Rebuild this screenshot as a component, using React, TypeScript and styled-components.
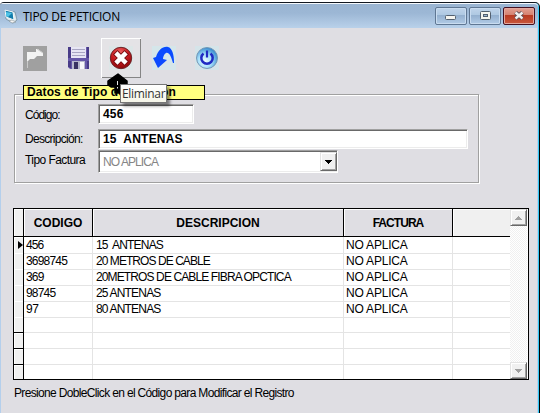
import React from "react";
import styled, { createGlobalStyle, css } from "styled-components";

const Global = createGlobalStyle`
  * { box-sizing: border-box; }
  body { margin: 0; background: #fff; overflow: hidden; }
`;

const Desktop = styled.main`
  width: 540px;
  height: 413px;
  padding-top: 2px;
  background: #fff;
  font: 12px/16px "Liberation Sans", Arial, sans-serif;
  color: #000;
`;

const Window = styled.section`
  position: relative;
  height: 411px;
  display: flex;
  flex-direction: column;
  border-top: 1px solid #111820;
  border-right: 1px solid #000;
  border-top-right-radius: 5px;
  border-top-left-radius: 4px;
  box-shadow: inset -1px 0 #35c9f5, inset -2px 0 #bcd2ea, inset 1px 0 #b4cfec;
  background: #dfdee3;
  overflow: hidden;
`;

const TitleBar = styled.header`
  height: 25px;
  flex: none;
  display: flex;
  align-items: flex-start;
  margin-right: 1px;
  padding: 4px 3px 0 4px;
  border-top: 1px solid #f4f8fc;
  border-top-right-radius: 4px;
  background: linear-gradient(#9ab5d2, #9cb7d5 38%, #b9d1ea);
`;

const Title = styled.h1`
  flex: 1;
  margin: 0 0 0 5px;
  font: 12px/16px "Open Sans", "Noto Sans", sans-serif;
  padding-top: 1px;
  letter-spacing: -0.27px;
`;

const WindowButtons = styled.div`
  display: flex;
  gap: 2px;
  margin-top: -1px;
`;

const WindowButton = styled.button<{ $close?: boolean }>`
  width: 32px;
  height: 18px;
  display: grid;
  place-items: center;
  padding: 0;
  border: 1px solid ${(p) => (p.$close ? "#451020" : "#5f7793")};
  border-radius: 2px;
  box-shadow: inset 0 0 0 1px ${(p) => (p.$close ? "#e3a79d" : "#c9dcf0")};
  background: ${(p) =>
    p.$close
      ? "linear-gradient(#e3a093, #d4806f 45%, #b83a22 46%, #c9573c)"
      : "linear-gradient(#bfd4ea, #aec8e2 45%, #94b0cf 46%, #b1cbe6)"};
`;

const Toolbar = styled.nav`
  display: flex;
  align-items: center;
  gap: 3px;
  height: 40px;
  margin: 10px 0 7px 15px;
  flex: none;
`;

const ToolButton = styled.button<{ $raised?: boolean }>`
  width: 40px;
  height: 40px;
  display: grid;
  place-items: center;
  padding: 0;
  border: 0;
  background: transparent;
  ${(p) =>
    p.$raised &&
    css`
      background: #e4e3e6;
      box-shadow: inset 1px 1px #fff, inset -1px -1px #858585;
    `}
`;

const Group = styled.fieldset`
  width: 465px;
  height: 98px;
  flex: none;
  margin: 0 0 0 14px;
  padding: 0;
  border: 0;
  display: flex;
  flex-direction: column;
`;

const GroupLabel = styled.div`
  position: relative;
  z-index: 1;
  flex: none;
  width: 182px;
  height: 15px;
  margin-left: 9px;
  padding-left: 3px;
  border: 1px solid #000;
  background: #ffff80;
  font-weight: bold;
  line-height: 13px;
  letter-spacing: 0.1px;
  white-space: nowrap;
`;

const GroupFrame = styled.div`
  height: 89px;
  margin-top: -6px;
  padding: 9px 0 0 10px;
  border: 1px solid #a0a0a0;
  box-shadow: 1px 1px #fff, inset 1px 1px #fff;
  flex: none;
`;

const FormRow = styled.div<{ $gap?: number }>`
  display: flex;
  align-items: flex-start;
  margin-bottom: ${(p) => p.$gap ?? 0}px;
`;

const FieldLabel = styled.label<{ $track: number; $top: number }>`
  width: 73px;
  padding-top: ${(p) => p.$top}px;
  line-height: 14px;
  letter-spacing: ${(p) => p.$track}px;
  white-space: pre;
`;

const Field = styled.div<{ $w: number; $h?: number; $track?: number; $muted?: boolean }>`
  width: ${(p) => p.$w}px;
  height: ${(p) => p.$h ?? 20}px;
  display: flex;
  align-items: center;
  justify-content: space-between;
  padding-left: 4px;
  border: 1px solid;
  border-color: #a0a0a0 #fff #fff #a0a0a0;
  box-shadow: inset 1px 1px #696969, inset -1px -1px #ececec;
  background: #fff;
  font-weight: ${(p) => (p.$muted ? "normal" : "bold")};
  color: ${(p) => (p.$muted ? "#858585" : "#000")};
  letter-spacing: ${(p) => p.$track ?? 0}px;
  white-space: pre;
`;

const ArrowButton = styled.button<{ $h: number }>`
  width: 17px;
  height: ${(p) => p.$h}px;
  flex: none;
  display: grid;
  place-items: center;
  padding: 0;
  border: 1px solid;
  border-color: #e3e3e3 #696969 #696969 #e3e3e3;
  box-shadow: inset 1px 1px #fff, inset -1px -1px #a0a0a0;
  background: #f0f0f0;
`;

const Grid = styled.div`
  width: 516px;
  height: 172px;
  flex: none;
  display: flex;
  margin: 25px 0 0 13px;
  border: 1px solid #000;
  background: #fff;
`;

const Rows = styled.div`
  width: 496px;
  overflow: hidden;
`;

const columns = "10px 69px 251px 109px 57px";

const HeaderRow = styled.div`
  display: grid;
  grid-template-columns: ${columns};
  height: 28px;
  border-bottom: 1px solid #000;
`;

const HeaderCell = styled.div<{ $track?: number; $light?: boolean; $last?: boolean }>`
  display: grid;
  place-items: center;
  padding-top: 1px;
  border-right: ${(p) => (p.$last ? 0 : 1)}px solid #000;
  box-shadow: inset 1px 1px #fff;
  background: ${(p) => (p.$light ? "#f0f0f0" : "#dfdee3")};
  font-weight: bold;
  letter-spacing: ${(p) => p.$track ?? 0}px;
`;

const Row = styled.div`
  display: grid;
  grid-template-columns: ${columns};
  height: 16px;
`;

const Selector = styled.div`
  display: flex;
  align-items: center;
  justify-content: flex-end;
  border-right: 1px solid #000;
  border-bottom: 1px solid #000;
  background: #f0f0f0;
  box-shadow: inset 1px 1px #fff;
`;

const Cell = styled.div<{ $track?: number; $last?: boolean; $pad?: number }>`
  padding-left: ${(p) => p.$pad ?? 2}px;
  border-right: ${(p) => (p.$last ? 0 : 1)}px solid #e4e4e4;
  border-bottom: 1px solid #e4e4e4;
  line-height: 16px;
  letter-spacing: ${(p) => p.$track ?? 0}px;
  white-space: pre;
`;

const ScrollBar = styled.div`
  width: 17px;
  display: flex;
  flex-direction: column;
  justify-content: space-between;
  background: repeating-conic-gradient(#f0f0f0 0 25%, #fff 0 50%) 0 0 / 2px 2px;
`;

const Hint = styled.p`
  margin: 5px 0 0 14px;
  line-height: 16px;
  letter-spacing: -0.66px;
  white-space: nowrap;
`;

const Tooltip = styled.div`
  position: absolute;
  z-index: 3;
  left: 120px;
  top: 81px;
  width: 47px;
  height: 19px;
  padding-left: 1px;
  border: 1px solid #767676;
  background: linear-gradient(#fff, #f5f5e8);
  box-shadow: 3px 3px 3px #0007;
  font: 12px/18px "Open Sans", "Noto Sans", sans-serif;
  letter-spacing: -0.32px;
  color: #333;
`;

const Pointer = styled.svg`
  position: absolute;
  z-index: 2;
  left: 107px;
  top: 70px;
`;

const Arrow = ({ up, color = "#000" }: { up?: boolean; color?: string }) => (
  <svg width="7" height="4" shapeRendering="crispEdges">
    <path d={up ? "M0 4h7v-1h-1v-1h-1v-1h-1v-1h-1v1h-1v1h-1v1h-1z" : "M0 0h7v1h-1v1h-1v1h-1v1h-1v-1h-1v-1h-1v-1h-1z"} fill={color} />
  </svg>
);

const AppIcon = () => (
  <svg width="14" height="16" viewBox="0 0 14 16">
    <path d="M1 2 11 4 13 12 9 15 2 11z" fill="#dfe9ee" stroke="#668293" strokeWidth=".7" />
    <path d="M1 2 9 4 10 12 2 9z" fill="#127cab" stroke="#f2fafc" />
    <path d="M2 4 8 5 4 9 2 8z" fill="#4fc3e6" />
    <path d="m5 13 3-1 4 2-4 1z" fill="#f4f4f4" stroke="#78868d" strokeWidth=".5" />
  </svg>
);

const NewIcon = () => (
  <svg width="24" height="25">
    <path d="M0 0h24v25H0z" fill="#a0a0a0" />
    <path d="M4 6h9V3h2l5 4v3h-6l-3 3H7l-3 3z" fill="#f3f3f3" />
    <path d="M4.500 15v7M14 3l6 4" fill="none" stroke="#c9c9c9" />
  </svg>
);

const SaveIcon = () => (
  <svg width="23" height="24">
    <path d="M1 1h21v22H3l-2-2z" fill="#6557a8" />
    <path d="M1 1h3v21l-3-1zM20 1h2v22h-2z" fill="#483b88" />
    <path d="M4 1h15v11H4z" fill="#e7e6f4" />
    <path d="M5 3.500h13M5 6.500h13M5 9.500h13" stroke="#a9a6c4" />
    <path d="M1 12h21v3H1z" fill="#6557a8" />
    <path d="M5 15h13v8H5z" fill="#b8b9ce" />
    <path d="M7 16h4v7H7z" fill="#393263" />
    <path d="M13 16h4v7h-4z" fill="#f6f6fa" />
  </svg>
);

const DeleteIcon = () => (
  <svg width="24" height="24">
    <defs>
      <radialGradient id="red" cx=".45" cy=".25" r=".8">
        <stop stopColor="#ee6666" />
        <stop offset=".5" stopColor="#c81c20" />
        <stop offset="1" stopColor="#830609" />
      </radialGradient>
    </defs>
    <path d="M0 0h24v24H0z" fill="#dce6e7" />
    <circle cx="12" cy="12" r="10.700" fill="url(#red)" stroke="#6b2528" />
    <path d="m8.500 8.500 7 7m0-7-7 7" stroke="#7d1115" strokeWidth="6.500" strokeLinecap="square" />
    <path d="m8.500 8.500 7 7m0-7-7 7" stroke="#fff" strokeWidth="4.500" strokeLinecap="square" />
  </svg>
);

const UndoIcon = () => (
  <svg width="24" height="24">
    <path d="M0 0h24v24H0z" fill="#d5e6ea" />
    <path d="M1 12 4 11C6 4 11 0 16 1c4 1 6 7 6 16h-1C19 10 17 6 14 7c-2 1-3 4-3 6l4 1-9 8z" fill="#0a4bff" />
  </svg>
);

const PowerIcon = () => (
  <svg width="24" height="24">
    <defs>
      <radialGradient id="blue" cx=".4" cy=".65" r=".65">
        <stop stopColor="#effcff" />
        <stop offset=".5" stopColor="#a7e0fa" />
        <stop offset="1" stopColor="#368bd0" />
      </radialGradient>
    </defs>
    <path d="M0 0h24v24H0z" fill="#d5e4e9" />
    <circle cx="12" cy="12" r="10.500" fill="url(#blue)" stroke="#7899b6" />
    <path d="M8.500 7.500a5.700 5.700 0 1 0 7 0" fill="none" stroke="#202bc3" strokeWidth="2.500" />
    <path d="M12 4.500v7" stroke="#202bc3" strokeWidth="2.200" />
  </svg>
);

const records = [
  { code: "456", ct: -0.9, text: "15  ANTENAS", tt: -0.82 },
  { code: "3698745", ct: -0.8, text: "20 METROS DE CABLE", tt: -0.94 },
  { code: "369", ct: -0.8, text: "20METROS DE CABLE FIBRA OPCTICA", tt: -0.88 },
  { code: "98745", ct: -0.8, text: "25 ANTENAS", tt: -0.82 },
  { code: "97", ct: -0.5, text: "80 ANTENAS", tt: -0.82 },
];

export default function App() {
  return (
    <>
      <Global />
      <Desktop>
        <Window>
          <TitleBar>
            <AppIcon />
            <Title>TIPO DE PETICION</Title>
            <WindowButtons>
              <WindowButton aria-label="Minimizar">
                <svg width="12" height="8"><rect x=".5" y="3.500" width="10" height="4" rx="1" fill="#f5f5f0" stroke="#53606f" /></svg>
              </WindowButton>
              <WindowButton aria-label="Maximizar">
                <svg width="11" height="10"><rect x=".5" y=".5" width="10" height="8" rx="1" fill="#f5f5f0" stroke="#53606f" /><rect x="3.500" y="3.500" width="4" height="2" fill="#9ab5d3" stroke="#53606f" /></svg>
              </WindowButton>
              <WindowButton $close aria-label="Cerrar">
                <svg width="12" height="10"><path d="m2.500 1.500 7 6m0-6-7 6" stroke="#574b54" strokeWidth="4.200" /><path d="m2.500 1.500 7 6m0-6-7 6" stroke="#f2f0f0" strokeWidth="2.400" /></svg>
              </WindowButton>
            </WindowButtons>
          </TitleBar>
          <Toolbar>
            <ToolButton aria-label="Nuevo"><NewIcon /></ToolButton>
            <ToolButton aria-label="Guardar"><SaveIcon /></ToolButton>
            <ToolButton $raised aria-label="Eliminar"><DeleteIcon /></ToolButton>
            <ToolButton aria-label="Deshacer"><UndoIcon /></ToolButton>
            <ToolButton aria-label="Salir"><PowerIcon /></ToolButton>
          </Toolbar>
          <Group>
            <GroupLabel>Datos de Tipo de Peticion</GroupLabel>
            <GroupFrame>
              <FormRow $gap={5}>
                <FieldLabel $track={-0.98} $top={4}>Código:</FieldLabel>
                <Field $w={96} $track={0.2}>456</Field>
              </FormRow>
              <FormRow $gap={1}>
                <FieldLabel $track={-0.7} $top={3}>Descripción:</FieldLabel>
                <Field $w={370} $track={0.2}>15  ANTENAS</Field>
              </FormRow>
              <FormRow>
                <FieldLabel $track={-0.57} $top={3}>Tipo Factura</FieldLabel>
                <Field $w={240} $h={23} $track={-0.92} $muted>
                  NO APLICA
                  <ArrowButton $h={19}><Arrow /></ArrowButton>
                </Field>
              </FormRow>
            </GroupFrame>
          </Group>
          <Grid>
            <Rows>
              <HeaderRow>
                <HeaderCell $light />
                <HeaderCell>CODIGO</HeaderCell>
                <HeaderCell>DESCRIPCION</HeaderCell>
                <HeaderCell $track={-0.95}>FACTURA</HeaderCell>
                <HeaderCell $light $last />
              </HeaderRow>
              {Array.from({ length: 9 }, (_, i) => {
                const r = records[i];
                return (
                  <Row key={i}>
                    <Selector>
                      {i === 0 && <svg width="5" height="8"><path d="M0 0 5 4 0 8z" /></svg>}
                    </Selector>
                    <Cell $track={r?.ct}>{r?.code}</Cell>
                    <Cell $track={r?.tt} $pad={3}>{r?.text}</Cell>
                    <Cell $track={-0.2}>{r && "NO APLICA"}</Cell>
                    <Cell $last />
                  </Row>
                );
              })}
            </Rows>
            <ScrollBar>
              <ArrowButton $h={17}><Arrow up color="#a0a0a0" /></ArrowButton>
              <ArrowButton $h={17}><Arrow color="#a0a0a0" /></ArrowButton>
            </ScrollBar>
          </Grid>
          <Hint>Presione DobleClick en el Código para Modificar el Registro</Hint>
          <Pointer width="22" height="22">
            <path d="M11 1 20 8v4l-2 2h-3v6h-7v-6h-4l-3-2V8z" stroke="#000" strokeWidth="1.500" strokeLinejoin="round" />
            <path d="M10.500 8v4M10.500 14v1.500" stroke="#e8e8e8" />
          </Pointer>
          <Tooltip role="tooltip">Eliminar</Tooltip>
        </Window>
      </Desktop>
    </>
  );
}
